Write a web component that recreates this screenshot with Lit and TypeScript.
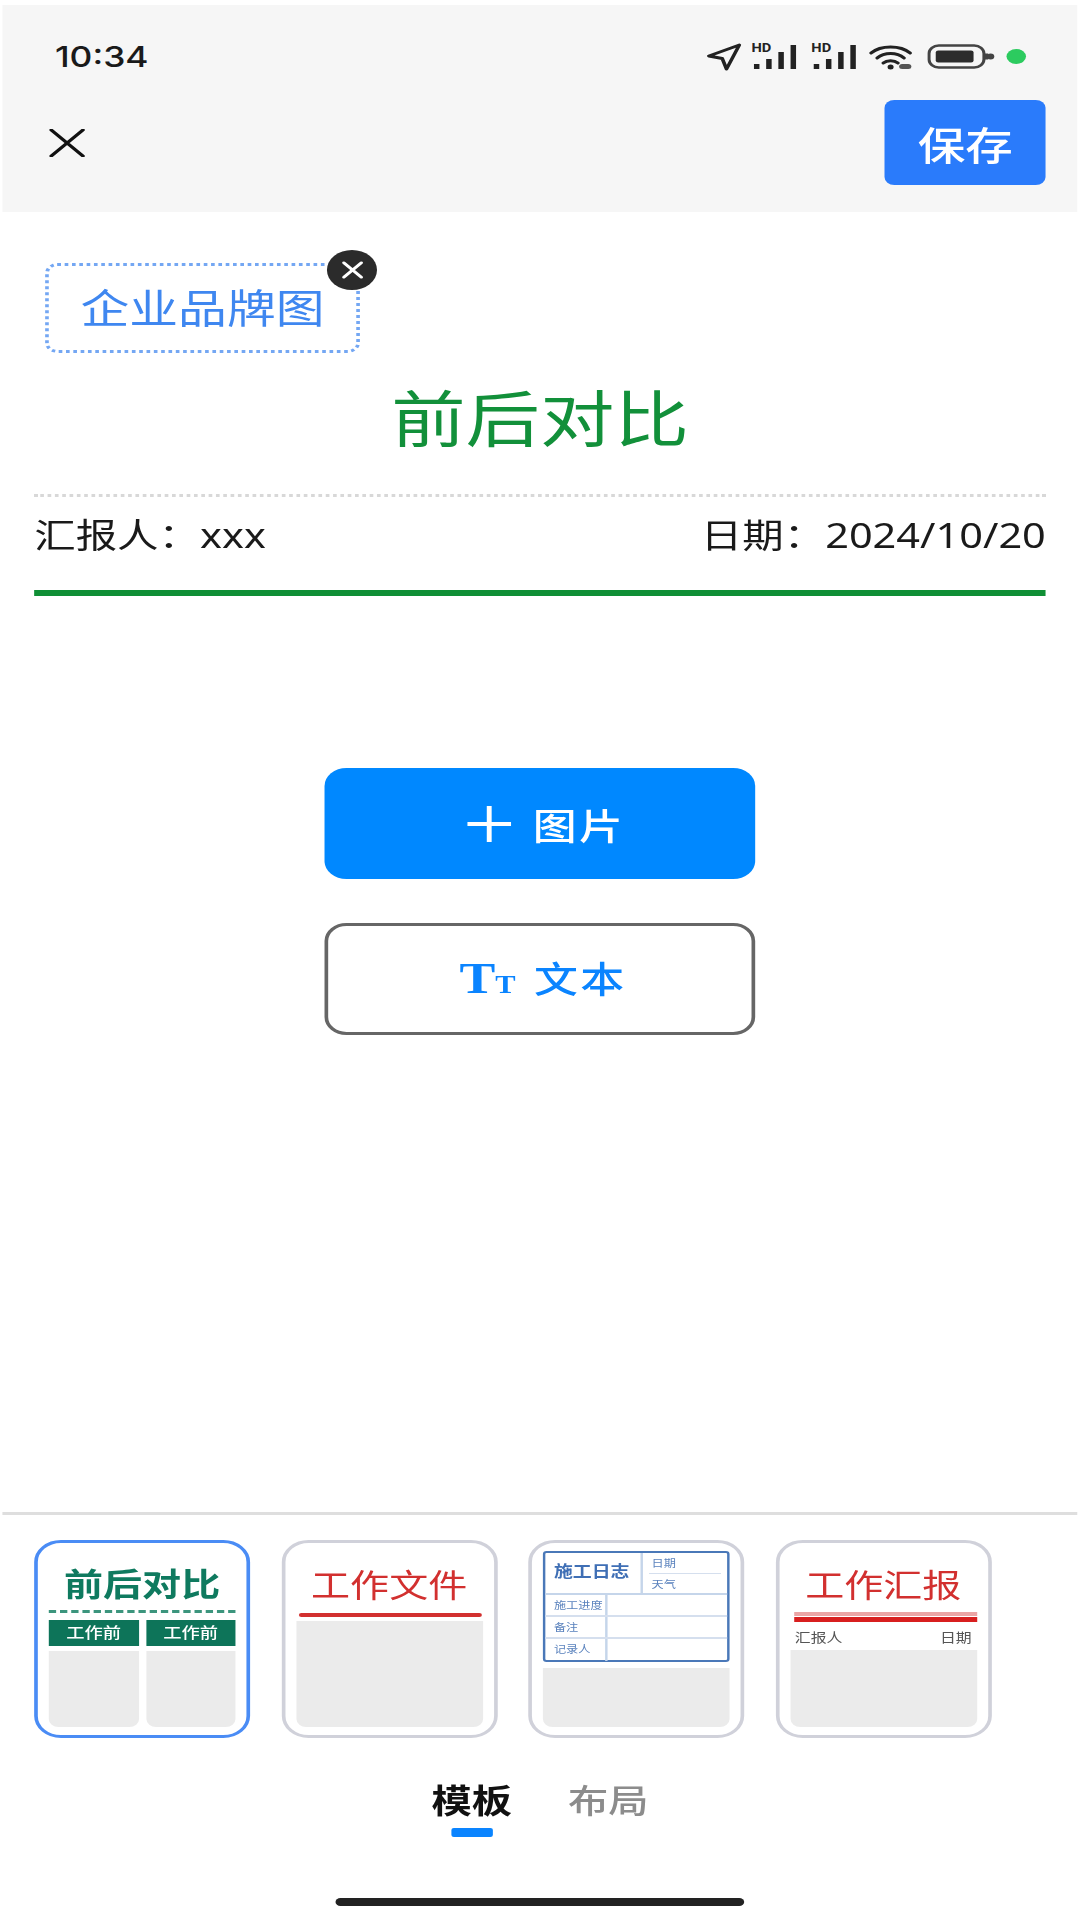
import { LitElement, css, html } from "lit";
import { customElement } from "lit/decorators.js";

// the screenshot is stretched sideways, so the page is laid out narrow and scaled to 1080
const signalIcon = html`
	<svg class="signal" viewBox="0 -4 40 33">
		<text x="0" y="9.5" font-size="12" font-weight="700" font-family="Roboto, sans-serif" fill="#222">HD</text>
		<rect x="2" y="22" width="4.5" height="5" fill="#222"/>
		<rect x="12" y="17" width="4.5" height="10" fill="#222"/>
		<rect x="22" y="10" width="4.5" height="17" fill="#222"/>
		<rect x="32" y="3" width="4.5" height="24" fill="#222"/>
	</svg>
`;

@customElement("app-root")
export class AppRoot extends LitElement {

	renderStatusBar() {
		return html`
			<div class="status">
				<span class="time">10:34</span>
				<div class="status-icons">
					<svg class="arrow" viewBox="0 0 30 29">
						<path d="M28 3 L3 14 L14 16.5 L17.5 27 Z" fill="none" stroke="#222" stroke-width="3" stroke-linejoin="round"/>
					</svg>
					${signalIcon}
					${signalIcon}
					<svg class="wifi" viewBox="0 0 36 26">
						<g fill="none" stroke="#222" stroke-width="3" stroke-linecap="round">
							<path d="M2 9 C10 1 26 1 34 9"/>
							<path d="M7 14 C13 8 23 8 29 14"/>
							<path d="M12 19 C15 16 21 16 24 19"/>
						</g>
						<circle cx="18" cy="23" r="2.5" fill="#222"/>
						<rect x="25" y="20" width="10" height="5" rx="2.5" fill="#555"/>
					</svg>
					<svg class="battery" viewBox="0 0 56 25">
						<rect x="1.5" y="1.5" width="45" height="22" rx="8" fill="none" stroke="#444" stroke-width="2.5"/>
						<rect x="7" y="6.5" width="31" height="12" rx="2" fill="#2c2c2c"/>
						<rect x="47" y="9.5" width="3" height="6" fill="#444"/>
						<circle cx="52" cy="12.5" r="3" fill="#444"/>
					</svg>
					<span class="dot"></span>
				</div>
			</div>
		`
	}

	renderReport() {
		return html`
			<div class="brand">
				<span>企业品牌图</span>
				<span class="brand-close">
					<svg viewBox="0 0 20 20">
						<path d="M4 4 L16 16 M16 4 L4 16" stroke="#fff" stroke-width="2.2" stroke-linecap="round"/>
					</svg>
				</span>
			</div>
			<h1 class="title">前后对比</h1>
			<div class="info">
				<span>汇报人：xxx</span>
				<span>日期：2024/10/20</span>
			</div>
			<div class="actions">
				<div class="action primary">
					<svg class="plus" viewBox="0 0 36 36">
						<path d="M0 18 H36 M18 0 V36" stroke="#fff" stroke-width="4"/>
					</svg>
					<span class="label">图片</span>
				</div>
				<div class="action outline">
					<span class="tt"><b>T</b><b class="small">T</b></span>
					<span class="label">文本</span>
				</div>
			</div>
		`
	}

	renderCompare() {
		return html`
			<div class="card active">
				<div class="card-title green">前后对比</div>
				<div class="dashes"></div>
				<div class="pair heads">
					<span>工作前</span>
					<span>工作前</span>
				</div>
				<div class="pair blocks">
					<div class="block"></div>
					<div class="block"></div>
				</div>
			</div>
		`
	}

	renderFile() {
		return html`
			<div class="card">
				<div class="card-title red">工作文件</div>
				<div class="red-line"></div>
				<div class="block file-block"></div>
			</div>
		`
	}

	renderLog() {
		return html`
			<div class="card">
				<div class="log">
					<div class="log-top">
						<div class="log-name">施工日志</div>
						<div class="log-side">
							<span>日期</span>
							<span>天气</span>
						</div>
					</div>
					<div class="log-row"><span>施工进度</span></div>
					<div class="log-row"><span>备注</span></div>
					<div class="log-row"><span>记录人</span></div>
				</div>
				<div class="block log-block"></div>
			</div>
		`
	}

	renderWorkReport() {
		return html`
			<div class="card">
				<div class="card-title red">工作汇报</div>
				<div class="double-line"></div>
				<div class="mini-info">
					<span>汇报人</span>
					<span>日期</span>
				</div>
				<div class="block report-block"></div>
			</div>
		`
	}

	render() {
		return html`
			<div class="stage">
				<header class="header">
					${this.renderStatusBar()}
					<div class="nav">
						<svg class="close" viewBox="0 0 30 28">
							<path d="M2 1 L28 27 M28 1 L2 27" stroke="#111" stroke-width="3" stroke-linecap="round"/>
						</svg>
						<div class="save">保存</div>
					</div>
				</header>

				<main class="report">
					${this.renderReport()}
				</main>

				<footer class="panel">
					<div class="cards">
						${this.renderCompare()}
						${this.renderFile()}
						${this.renderLog()}
						${this.renderWorkReport()}
					</div>
					<div class="tabs">
						<div class="tab current">
							<span>模板</span>
							<i></i>
						</div>
						<div class="tab">
							<span>布局</span>
						</div>
					</div>
					<div class="home"></div>
				</footer>
			</div>
		`
	}

	static styles = css`
		:host {
			display: block;
			width: 1080px;
			height: 1920px;
			overflow: hidden;
			background: #fff;
		}
		:host * {
			padding: 0;
			margin: 0;
			box-sizing: border-box;
		}
		.stage {
			display: flex;
			flex-direction: column;
			width: 885.25px;
			height: 1920px;
			transform: scaleX(1.22);
			transform-origin: 0 0;
			font-family: Inter, "Noto Sans CJK SC", sans-serif;
			color: #1a1a1a;
		}
		svg {
			display: block;
			flex: none;
		}

		.header {
			height: 207px;
			margin: 5px 2px 0;
			padding: 37px 26px 0 43px;
			background: #f6f6f6;
		}
		.status {
			display: flex;
			justify-content: space-between;
			align-items: center;
			height: 29px;
			padding-right: 16px;
		}
		.time {
			font-family: Inter, sans-serif;
			font-size: 29px;
			font-weight: 500;
			line-height: 29px;
		}
		.status-icons {
			display: flex;
			align-items: center;
			gap: 9px;
		}
		.arrow {
			width: 30px;
			height: 29px;
			margin: 0 -1px 0 -2px;
		}
		.signal {
			width: 40px;
			height: 33px;
			margin-top: -4px;
		}
		.wifi {
			width: 36px;
			height: 26px;
			margin: 0 3px 0 -2px;
		}
		.battery {
			width: 56px;
			height: 25px;
		}
		.dot {
			width: 16px;
			height: 15px;
			border-radius: 50%;
			background: #2ccb5f;
		}
		.nav {
			display: flex;
			justify-content: space-between;
			align-items: center;
			margin-top: 29px;
		}
		.close {
			width: 30px;
			height: 28px;
			margin-left: -5px;
		}
		.save {
			display: flex;
			justify-content: center;
			align-items: center;
			width: 132px;
			height: 85px;
			border-radius: 8px;
			background: #2a7bfb;
			color: #fff;
			font-size: 39px;
			font-weight: 500;
		}

		.report {
			padding: 0 28px;
		}
		.brand {
			position: relative;
			display: flex;
			justify-content: center;
			align-items: center;
			width: 258px;
			height: 90px;
			margin: 51px 0 0 9px;
			padding-bottom: 5px;
			border: 3px dotted #74a7f3;
			border-radius: 10px;
			color: #3f87f0;
			font-size: 40px;
			font-weight: 400;
		}
		.brand-close {
			position: absolute;
			top: -16px;
			right: -17px;
			display: flex;
			justify-content: center;
			align-items: center;
			width: 41px;
			height: 40px;
			border-radius: 50%;
			background: #2b2b2b;
		}
		.brand-close svg {
			width: 24px;
			height: 24px;
		}
		.title {
			margin-top: 27px;
			color: #12903a;
			font-size: 61px;
			font-weight: 400;
			line-height: 80px;
			text-align: center;
		}
		.info {
			display: flex;
			justify-content: space-between;
			margin-top: 34px;
			padding: 16px 0 33px;
			border-top: 3px dotted #d8d8d8;
			border-bottom: 6px solid #0f8f35;
			font-family: "Noto Sans", "Noto Sans CJK SC", sans-serif;
			font-size: 34px;
			line-height: 44px;
		}
		.actions {
			display: flex;
			flex-direction: column;
			align-items: center;
			gap: 44px;
			margin-top: 172px;
		}
		.action {
			display: flex;
			justify-content: center;
			align-items: center;
			gap: 18px;
			width: 353px;
			height: 111px;
			padding-left: 10px;
			border-radius: 18px;
			font-size: 36px;
			font-weight: 500;
		}
		.label {
			letter-spacing: 2px;
		}
		.primary {
			background: #0088ff;
			color: #fff;
		}
		.outline {
			gap: 15px;
			height: 112px;
			padding-left: 5px;
			border: 3px solid #666;
			color: #0a84ff;
		}
		.outline .label {
			margin-bottom: 4px;
		}
		.plus {
			width: 36px;
			height: 36px;
		}
		.tt {
			display: flex;
			align-items: baseline;
			margin-top: 5px;
			font-family: "Liberation Serif", serif;
			font-size: 44px;
			line-height: 44px;
		}
		.tt .small {
			font-size: 25px;
		}

		.panel {
			margin: auto 2px 0;
			border-top: 3px solid #dedede;
		}
		.cards {
			display: flex;
			gap: 25.5px;
			height: 198px;
			margin-top: 25px;
			padding-left: 26px;
		}
		.card {
			display: flex;
			flex-direction: column;
			width: 177px;
			height: 198px;
			padding: 0 9px 8px;
			border: 3px solid #d0d1da;
			border-radius: 22px;
		}
		.card.active {
			border-color: #4a8cf5;
		}
		.block {
			flex: 1;
			border-radius: 0 0 8px 8px;
			background: #ebebeb;
		}
		.card-title {
			margin-top: 27px;
			font-size: 32px;
			line-height: 32px;
			white-space: nowrap;
			text-align: center;
		}
		.green {
			margin-top: 26px;
			color: #0f7a5f;
			font-weight: 700;
		}
		.red {
			color: #d2302f;
			font-family: "Liberation Serif", "Noto Sans CJK SC", serif;
			font-weight: 400;
		}
		.dashes {
			margin: 9px 0 0;
			border-top: 3px dashed #3c957d;
		}
		.pair {
			display: grid;
			grid-template-columns: 1fr 1fr;
			gap: 6px;
		}
		.heads {
			height: 26px;
			margin-top: 7px;
		}
		.heads span {
			background: #0d7459;
			color: #fff;
			font-size: 15px;
			font-weight: 500;
			line-height: 26px;
			text-align: center;
		}
		.blocks {
			flex: 1;
			margin-top: 5px;
		}
		.red-line {
			height: 4px;
			margin: 11px 1px 0 2px;
			border-radius: 2px;
			background: #d2302f;
		}
		.file-block {
			margin-top: 4px;
		}

		.log {
			height: 111px;
			margin-top: 8px;
			border: 2px solid #4a78b8;
			border-radius: 3px;
			color: #5a82bd;
			font-size: 10px;
		}
		.log-top {
			display: flex;
			height: 42px;
			border-bottom: 2px solid #c5d5ea;
		}
		.log-name {
			width: 80px;
			padding-left: 7px;
			border-right: 2px solid #c5d5ea;
			color: #3f6fb5;
			font-size: 15.5px;
			font-weight: 700;
			line-height: 38px;
			white-space: nowrap;
		}
		.log-side {
			flex: 1;
			display: grid;
			grid-template-rows: 1fr 1fr;
			padding: 0 5px;
		}
		.log-side span {
			padding-left: 2px;
			line-height: 20px;
		}
		.log-side span:first-child {
			border-bottom: 1px solid #d5dfee;
		}
		.log-row {
			height: 22px;
			padding-left: 7px;
			line-height: 21px;
		}
		.log-row span {
			display: block;
			width: 44px;
			height: 100%;
			border-right: 2px solid #c5d5ea;
		}
		.log-row:not(:last-child) {
			border-bottom: 2px solid #d5dfee;
		}
		.log-block {
			margin-top: 6px;
		}

		.double-line {
			height: 10px;
			margin: 10px 0 0 3px;
			border-top: 4px solid #eba5a5;
			border-bottom: 5px solid #d81f1f;
		}
		.mini-info {
			display: flex;
			justify-content: space-between;
			margin: 6px 4px 0;
			color: #555;
			font-size: 13px;
			line-height: 18px;
		}
		.report-block {
			margin-top: 4px;
		}

		.tabs {
			display: flex;
			justify-content: center;
			gap: 46px;
			height: 58px;
			margin-top: 41px;
		}
		.tab {
			display: flex;
			flex-direction: column;
			align-items: center;
			color: #8c8c8c;
			font-size: 33px;
			font-weight: 500;
			line-height: 44px;
		}
		.tab.current {
			color: #111;
			font-weight: 700;
		}
		.tab i {
			display: block;
			width: 34px;
			height: 9px;
			margin-top: 5px;
			border-radius: 2px;
			background: #0a84ff;
		}
		.home {
			width: 335px;
			height: 8px;
			margin: 61px auto 14px;
			border-radius: 4px;
			background: #222;
		}
	`;

}

declare global {
	interface HTMLElementTagNameMap {
		'app-root': AppRoot
	}
}
